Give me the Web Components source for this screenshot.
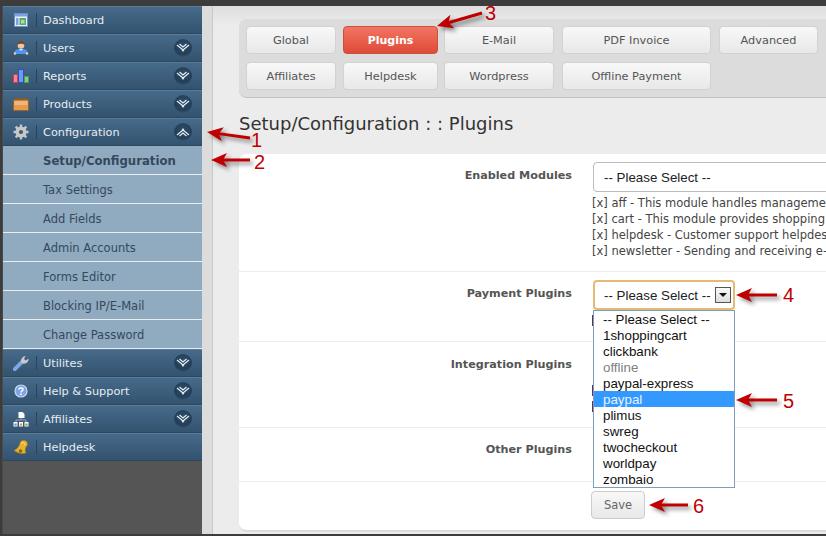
<!DOCTYPE html>
<html>
<head>
<meta charset="utf-8">
<style>
  html,body{margin:0;padding:0;height:100%;overflow:hidden;background:#ececec;}
  body{font-family:"DejaVu Sans",sans-serif;}
  .tick{width:2px;height:11px;margin-left:-1px;background:#5e3060;}
</style>
</head>
<body>
<template id="icons">
  <svg data-i="dashboard" viewBox="0 0 14 14" width="14" height="14"><rect x=".5" y=".5" width="13" height="13" fill="#e8eef8" stroke="#6d8fd0"/><rect x="1" y="1" width="12" height="2.5" fill="#7fa0dc"/><rect x="2" y="5" width="2.5" height="7" fill="#7ea2de"/><rect x="5.5" y="5" width="6.5" height="7" fill="#58ad62"/><rect x="7" y="7" width="3.5" height="3.5" fill="#a9dcae"/></svg>
  <svg data-i="user" viewBox="0 0 16 14" width="16" height="14"><path d="M1 13c0-3 2-4.500 4.500-5h5C13 8.500 15 10 15 13z" fill="#4f95ec"/><circle cx="8" cy="4.500" r="3.300" fill="#f0c5a0"/><path d="M4.500 4.500C4 1.500 6 .5 8 .5s4 1 3.500 4C11 3 9.500 2.800 8 2.800S5 3 4.500 4.500z" fill="#7a4222"/><path d="M6 8l2 2 2-2z" fill="#dfeaf8"/><circle cx="2" cy="12.500" r="1.300" fill="#f0c5a0"/><circle cx="14" cy="12.500" r="1.300" fill="#f0c5a0"/></svg>
  <svg data-i="reports" viewBox="0 0 16 14" width="16" height="14"><rect x=".5" y="5.500" width="4" height="8" fill="#f08a98" stroke="#d43a50"/><rect x="5.500" y=".5" width="5" height="13" fill="#6c9be8" stroke="#2b50c0"/><rect x="11.500" y="7.500" width="4" height="6" fill="#8cc98a" stroke="#4c9a4c"/></svg>
  <svg data-i="products" viewBox="0 0 16 14" width="16" height="14"><path d="M1.500 3l1-2h11l1 2z" fill="#8a5a2a"/><rect x=".5" y="3" width="15" height="10.500" rx="1" fill="#e69a4e" stroke="#9a6428"/><rect x="1.500" y="4" width="13" height="4" fill="#eeb67c"/></svg>
  <svg data-i="gear" viewBox="0 0 16 16" width="16" height="16"><path d="M8 4.200a3.800 3.800 0 1 0 0 7.600 3.800 3.800 0 0 0 0-7.600z" fill="none" stroke="#c8c8c8" stroke-width="3.400"/><path d="M8 .5v3M8 12.500v3M.5 8h3M12.500 8h3M2.700 2.700l2.100 2.100M11.200 11.200l2.100 2.100M2.700 13.300l2.100-2.100M11.200 4.800l2.100-2.100" stroke="#c8c8c8" stroke-width="2.400"/></svg>
  <svg data-i="wrench" viewBox="0 0 16 16" width="16" height="16"><path d="M1.800 14.200l7-7" stroke="#7ea6ea" stroke-width="4" stroke-linecap="round"/><path d="M8.200 7.500c-.8-3 1-6 4.300-6.500l-1.500 3 2 1.500 2.500-2c.4 3-2 5.500-5 5.200z" fill="#c9c9c9"/></svg>
  <svg data-i="help" viewBox="0 0 14 14" width="14" height="14"><circle cx="7" cy="7" r="6" fill="#7fa3df" stroke="#c7d8f4" stroke-width="1.200"/><path d="M5 5.500C5 3.500 9 3.500 9 5.500 9 7 7 7 7 8.500" fill="none" stroke="#fff" stroke-width="1.500"/><rect x="6.200" y="9.500" width="1.600" height="1.600" fill="#fff"/></svg>
  <svg data-i="tree" viewBox="0 0 16 16" width="16" height="16"><path d="M5.500 1h4l2 2v4h-6z" fill="#fff"/><path d="M8 7v2M3 11V9h10v2" fill="none" stroke="#9aa7b4"/><rect x=".5" y="11" width="4" height="4.500" fill="#fff"/><rect x="6" y="11" width="4" height="4.500" fill="#fff"/><rect x="11.500" y="11" width="4" height="4.500" fill="#fff"/><rect x="1.300" y="12.500" width="2.400" height="2.200" fill="#5b9be0"/><rect x="6.800" y="12.500" width="2.400" height="2.200" fill="#ee8a55"/><rect x="12.300" y="12.500" width="2.400" height="2.200" fill="#63b96a"/></svg>
  <svg data-i="bell" viewBox="0 0 16 16" width="16" height="16"><path d="M1 11.500C4 10 6 8 7 4c1-3 4-3.500 6-2 2 2 2 4 0 6-1 2-1 4 0 6-4 1-8 .5-12-2.500z" fill="#e6b22e" stroke="#a87c14" stroke-width=".6"/><path d="M8 4c2-1 4 0 4 2" fill="none" stroke="#f8e49a"/><circle cx="7.500" cy="12" r="1.800" fill="#8f6610"/></svg>
</template>

<admin-page>
  <side-menu slot="side">
    <menu-item icon="dashboard">Dashboard</menu-item>
    <menu-item icon="user" toggle="down">Users</menu-item>
    <menu-item icon="reports" toggle="down">Reports</menu-item>
    <menu-item icon="products" toggle="down">Products</menu-item>
    <menu-item icon="gear" toggle="up">Configuration</menu-item>
    <sub-item active>Setup/Configuration</sub-item>
    <sub-item>Tax Settings</sub-item>
    <sub-item>Add Fields</sub-item>
    <sub-item>Admin Accounts</sub-item>
    <sub-item>Forms Editor</sub-item>
    <sub-item>Blocking IP/E-Mail</sub-item>
    <sub-item>Change Password</sub-item>
    <menu-item icon="wrench" toggle="down">Utilites</menu-item>
    <menu-item icon="help" toggle="down">Help &amp; Support</menu-item>
    <menu-item icon="tree" toggle="down">Affiliates</menu-item>
    <menu-item icon="bell">Helpdesk</menu-item>
  </side-menu>

  <tab-bar>
    <tab-button w="90">Global</tab-button>
    <tab-button w="95" active>Plugins</tab-button>
    <tab-button w="110" style="margin:0 1px 0 -1px">E-Mail</tab-button>
    <tab-button w="149" style="margin-right:1px">PDF Invoice</tab-button>
    <tab-button w="99">Advanced</tab-button>
    <tab-button w="90">Affiliates</tab-button>
    <tab-button w="95">Helpdesk</tab-button>
    <tab-button w="110" style="margin:0 1px 0 -1px">Wordpress</tab-button>
    <tab-button w="149">Offline Payment</tab-button>
  </tab-bar>

  <page-title>Setup/Configuration : : Plugins</page-title>

  <form-panel>
    <form-row label="Enabled Modules" h="118" lt="15">
      <select-box>-- Please Select --</select-box>
      <module-list>
        <div>[x] aff - This module handles management of affiliate</div>
        <div>[x] cart - This module provides shopping cart for users</div>
        <div>[x] helpdesk - Customer support helpdesk and tickets</div>
        <div>[x] newsletter - Sending and receiving e-mail news</div>
      </module-list>
    </form-row>
    <form-row label="Payment Plugins" h="70" lt="15">
      <select-box focused>-- Please Select --</select-box>
      <div class="tick" style="margin-top:5px"></div>
    </form-row>
    <form-row label="Integration Plugins" h="86" lt="16">
      <div class="tick" style="margin-top:35px"></div>
      <div class="tick" style="margin-top:5px"></div>
    </form-row>
    <form-row label="Other Plugins" h="54" lt="15"></form-row>
    <save-bar>Save</save-bar>
  </form-panel>

  <open-list>
    <div>-- Please Select --</div>
    <div>1shoppingcart</div>
    <div>clickbank</div>
    <div class="off">offline</div>
    <div>paypal-express</div>
    <div class="sel">paypal</div>
    <div>plimus</div>
    <div>swreg</div>
    <div>twocheckout</div>
    <div>worldpay</div>
    <div>zombaio</div>
  </open-list>

  <call-out n="1" x1="250" y1="138" x2="207" y2="132" nx="251" ny="134"></call-out>
  <call-out n="2" x1="250" y1="160" x2="211" y2="160" nx="254" ny="156"></call-out>
  <call-out n="3" x1="482" y1="13" x2="437" y2="26" nx="485" ny="7"></call-out>
  <call-out n="4" x1="777" y1="295" x2="736" y2="295" nx="783" ny="289"></call-out>
  <call-out n="5" x1="777" y1="400" x2="736" y2="400" nx="783" ny="395"></call-out>
  <call-out n="6" x1="688" y1="505" x2="649" y2="505" nx="693" ny="500"></call-out>
</admin-page>

<script>
class adminPage extends HTMLElement{
  constructor(){
    super();
    this.attachShadow({mode:"open"});
    this.shadowRoot.innerHTML = `
      <style>
        :host{display:flex;position:relative;width:826px;height:536px;overflow:hidden;box-sizing:border-box;background:#ececec;border:solid #3c3c3c;border-width:6px 0 2px 2px;}
        .side{width:200px;flex:none;background:#555;border-left:1px solid #4a4a4a;box-sizing:border-box;}
        .gutter{width:10px;flex:none;background:#dcdcdc;border-right:1px solid #c8c8c8;}
        .main{flex:1;min-width:0;display:flex;flex-direction:column;padding:13px 0 0 26px;background:linear-gradient(#dedede,#ececec 20px);}
      </style>
      <div class="side"><slot name="side"></slot></div>
      <div class="gutter"></div>
      <div class="main"><slot></slot></div>
    `;
  }
}

class sideMenu extends HTMLElement{
  constructor(){
    super();
    this.attachShadow({mode:"open"});
    this.shadowRoot.innerHTML = `<style>:host{display:flex;flex-direction:column;}</style><slot></slot>`;
  }
}

class menuItem extends HTMLElement{
  constructor(){
    super();
    this.attachShadow({mode:"open"});
  }
  connectedCallback(){
    const icon = document.getElementById('icons').content.querySelector(`[data-i="${this.getAttribute('icon')}"]`);
    const dir = this.getAttribute('toggle');
    const chev = dir == 'up'
      ? 'M1 9l6-5 6 5M3.500 10l3.500-3 3.500 3M6 4.500l1-1.500 1 1.500'
      : 'M1 3l6 5 6-5M3.500 2l3.500 3 3.500-3M6 7.500l1 1.500 1-1.500';
    this.shadowRoot.innerHTML = `
      <style>
        :host{display:flex;align-items:center;height:28px;box-sizing:border-box;background:linear-gradient(#466a8a,#33536f);border-top:1px solid #5a7c99;border-bottom:1px solid #2c4760;color:#e6edf2;font-size:11.300px;}
        .ic{width:33px;box-sizing:border-box;padding-left:2px;flex:none;display:flex;justify-content:center;}
        .sep{width:1px;height:14px;background:#28445c;margin-right:6px;}
        .t{flex:1;padding-top:1px;}
        .tg{width:18px;height:18px;border-radius:50%;background:radial-gradient(circle at 50% 35%,#2a4a66,#243f58 60%,#3f6585);margin-right:10px;display:flex;align-items:center;justify-content:center;}
      </style>
      <span class="ic">${icon.outerHTML}</span><span class="sep"></span><span class="t"><slot></slot></span>
      ${dir ? `<span class="tg"><svg width="14" height="12" viewBox="0 0 14 12"><path d="${chev}" fill="none" stroke="#e8eef2" stroke-width="1.200"/></svg></span>` : ''}
    `;
  }
}

class subItem extends HTMLElement{
  constructor(){
    super();
    this.attachShadow({mode:"open"});
    this.shadowRoot.innerHTML = `
      <style>
        :host{display:flex;align-items:center;height:29px;box-sizing:border-box;padding:1px 0 0 40px;background:#90aabf;border-bottom:1px solid #e8eef2;color:#34495e;font-size:11.500px;}
        :host([active]){font-weight:bold;font-size:11.700px;}
      </style>
      <slot></slot>
    `;
  }
}

class tabBar extends HTMLElement{
  constructor(){
    super();
    this.attachShadow({mode:"open"});
    this.shadowRoot.innerHTML = `
      <style>
        :host{display:flex;flex-wrap:wrap;gap:8px 7px;width:640px;box-sizing:border-box;padding:7px 7px 7px 7px;background:#dcdcdc;border-radius:8px 0 0 8px;border-bottom:1px solid #c4c4c4;}
      </style>
      <slot></slot>
    `;
  }
}

class tabButton extends HTMLElement{
  constructor(){
    super();
    this.attachShadow({mode:"open"});
  }
  connectedCallback(){
    this.shadowRoot.innerHTML = `
      <style>
        :host{display:flex;align-items:center;justify-content:center;width:${this.getAttribute('w')}px;height:28px;box-sizing:border-box;padding-top:1px;border:1px solid #d2d2d2;border-radius:4px;background:linear-gradient(#f8f8f8,#e8e8e8);color:#555;font-size:11.300px;}
        :host([active]){background:linear-gradient(#f17562,#e04a38);border-color:#c9503f;color:#fff;font-weight:bold;font-size:11px;}
      </style>
      <slot></slot>
    `;
  }
}

class pageTitle extends HTMLElement{
  constructor(){
    super();
    this.attachShadow({mode:"open"});
    this.shadowRoot.innerHTML = `
      <style>:host{display:block;height:56px;box-sizing:border-box;padding-top:16px;font-size:18px;line-height:20px;color:#333;}</style>
      <slot></slot>
    `;
  }
}

class formPanel extends HTMLElement{
  constructor(){
    super();
    this.attachShadow({mode:"open"});
    this.shadowRoot.innerHTML = `
      <style>:host{display:flex;flex-direction:column;height:378px;background:#fff;border-radius:8px 0 0 8px;border-bottom:2px solid #dcdcdc;box-sizing:border-box;}</style>
      <slot></slot>
    `;
  }
}

class formRow extends HTMLElement{
  constructor(){
    super();
    this.attachShadow({mode:"open"});
  }
  connectedCallback(){
    this.shadowRoot.innerHTML = `
      <style>
        :host{display:flex;height:${this.getAttribute('h')}px;box-sizing:border-box;border-bottom:1px solid #ececec;}
        .l{width:333px;flex:none;box-sizing:border-box;padding-top:${this.getAttribute('lt')}px;text-align:right;font-weight:bold;font-size:11.200px;color:#555;}
        .f{margin-left:21px;padding-top:8px;min-width:0;flex:1;}
      </style>
      <div class="l">${this.getAttribute('label')}</div>
      <div class="f"><slot></slot></div>
    `;
  }
}

class selectBox extends HTMLElement{
  constructor(){
    super();
    this.attachShadow({mode:"open"});
  }
  connectedCallback(){
    const focused = this.hasAttribute('focused');
    this.shadowRoot.innerHTML = `
      <style>
        :host{display:flex;align-items:center;box-sizing:border-box;width:${focused ? 142 : 300}px;height:30px;padding:0 0 0 10px;background:#fff;border:1px solid #bbb;border-radius:4px;font-family:"Liberation Sans",sans-serif;font-size:13.333px;color:#222;}
        :host([focused]){border:2px solid #e3bb74;padding-left:9px;}
        .b{width:16px;height:16px;box-sizing:border-box;margin-left:4px;border:1px solid #555;background:linear-gradient(#fafafa,#ddd);display:flex;align-items:center;justify-content:center;}
        .b i{width:0;height:0;border:4px solid transparent;border-top-color:#111;border-bottom:0;}
      </style>
      <slot></slot>
      ${focused ? '<span class="b"><i></i></span>' : ''}
    `;
  }
}

class moduleList extends HTMLElement{
  constructor(){
    super();
    this.attachShadow({mode:"open"});
    this.shadowRoot.innerHTML = `
      <style>:host{display:block;margin:3px 0 0 -1px;white-space:nowrap;font-size:11.500px;line-height:16px;color:#444;}</style>
      <slot></slot>
    `;
  }
}

class saveBar extends HTMLElement{
  constructor(){
    super();
    this.attachShadow({mode:"open"});
    this.shadowRoot.innerHTML = `
      <style>
        :host{display:block;padding:9px 0 0 352px;}
        .s{display:flex;align-items:center;justify-content:center;width:54px;height:28px;box-sizing:border-box;border:1px solid #ccc;border-radius:4px;background:linear-gradient(#f8f8f8,#e8e8e8);color:#666;font-size:11.500px;}
      </style>
      <div class="s"><slot></slot></div>
    `;
  }
}

class openList extends HTMLElement{
  constructor(){
    super();
    this.attachShadow({mode:"open"});
    this.shadowRoot.innerHTML = `
      <style>
        :host{position:absolute;left:591px;top:304px;width:142px;box-sizing:border-box;border:1px solid #7f9db9;background:#fff;font-family:"Liberation Sans",sans-serif;font-size:13.333px;line-height:15px;color:#111;}
        ::slotted(div){box-sizing:border-box;padding:1px 0 0 9px;height:16px;}
        ::slotted(.off){color:#808080;}
        ::slotted(.sel){background:#3399ff;color:#e8f2ff;}
      </style>
      <slot></slot>
    `;
  }
}

class callOut extends HTMLElement{
  constructor(){
    super();
    this.attachShadow({mode:"open"});
  }
  connectedCallback(){
    const g = k => +this.getAttribute(k);
    const x1 = g('x1'), y1 = g('y1'), x2 = g('x2'), y2 = g('y2');
    const a = Math.atan2(y1-y2, x1-x2), c = Math.cos(a), s = Math.sin(a);
    const nx = x2+c*16, ny = y2+s*16;
    const head = `${x2},${y2} ${nx-s*7},${ny+c*7} ${x2+c*12},${y2+s*12} ${nx+s*7},${ny-c*7}`;
    // el padre tiene borde izq 2 y sup 6, por eso left y top negativos
    this.shadowRoot.innerHTML = `
      <style>
        :host{position:absolute;left:-2px;top:-6px;width:826px;height:536px;pointer-events:none;}
        svg{position:absolute;left:0;top:0;filter:drop-shadow(3px 3px 2px rgba(0,0,0,.45));}
        span{position:absolute;left:${g('nx')}px;top:${g('ny')}px;font-family:"Liberation Sans",sans-serif;font-size:20px;line-height:12px;color:#c00000;}
      </style>
      <svg width="826" height="536"><line x1="${x1}" y1="${y1}" x2="${x2+c*10}" y2="${y2+s*10}" stroke="#c00000" stroke-width="3"/><polygon points="${head}" fill="#c00000"/></svg>
      <span>${this.getAttribute('n')}</span>
    `;
  }
}

customElements.define('admin-page', adminPage);
customElements.define('side-menu', sideMenu);
customElements.define('menu-item', menuItem);
customElements.define('sub-item', subItem);
customElements.define('tab-bar', tabBar);
customElements.define('tab-button', tabButton);
customElements.define('page-title', pageTitle);
customElements.define('form-panel', formPanel);
customElements.define('form-row', formRow);
customElements.define('select-box', selectBox);
customElements.define('module-list', moduleList);
customElements.define('save-bar', saveBar);
customElements.define('open-list', openList);
customElements.define('call-out', callOut);
</script>
</body>
</html>
